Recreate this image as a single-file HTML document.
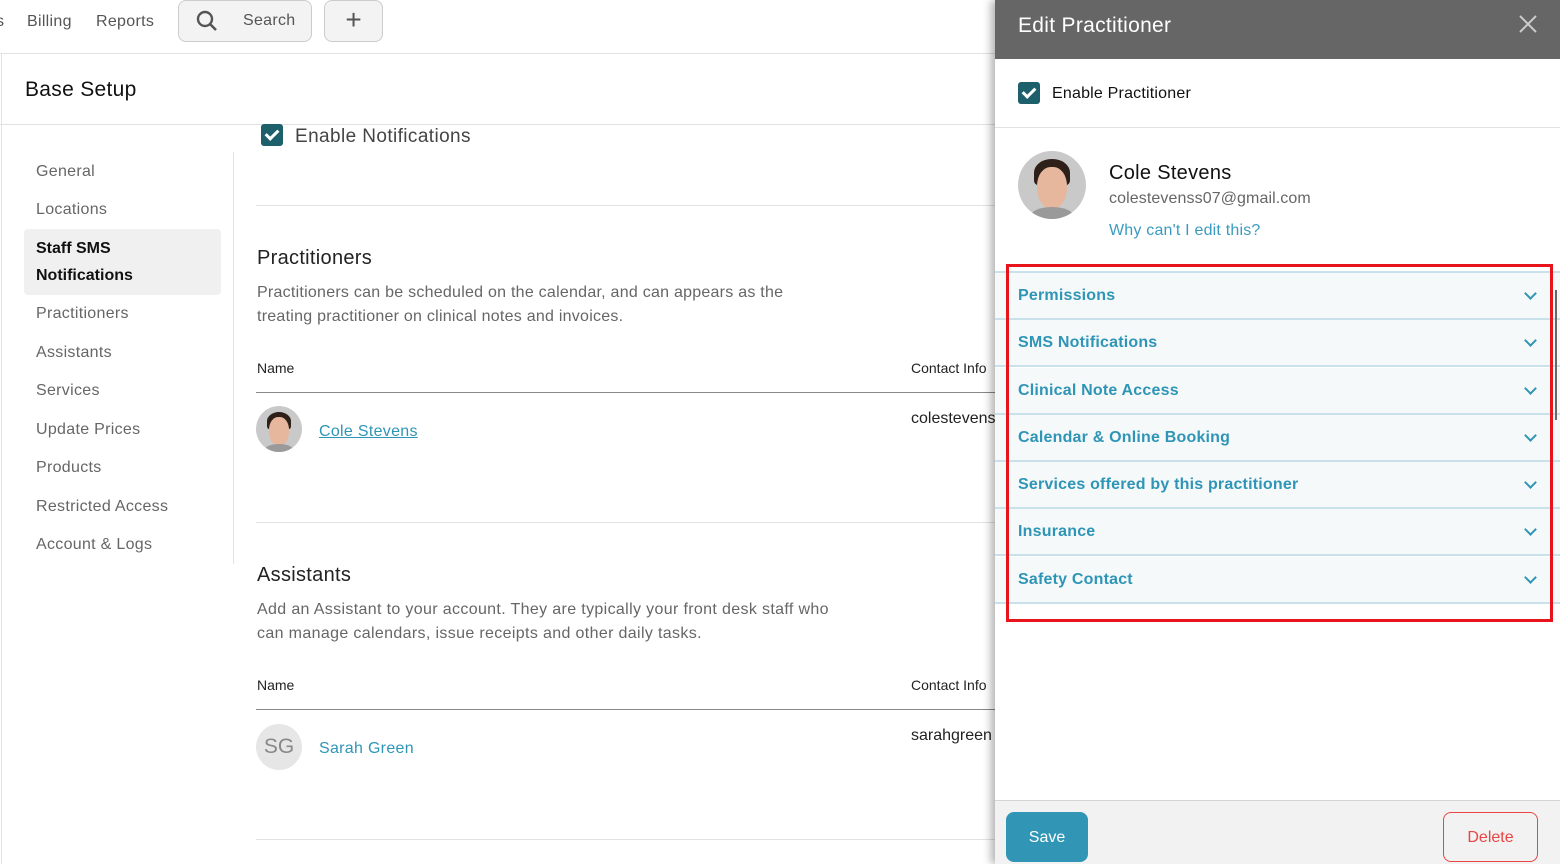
<!DOCTYPE html><html><head><style>
*{box-sizing:border-box;margin:0;padding:0}
body{width:1560px;height:864px;overflow:hidden;font-family:"Liberation Sans",sans-serif;background:#fff;position:relative;color:#222}
.a{position:absolute;white-space:nowrap}
.nav{font-size:16px;color:#555;letter-spacing:.3px}
.side{font-size:16px;color:#666;letter-spacing:.3px}
.cb{width:22px;height:22px;background:#1d5f6b;border-radius:3px}
.cb:after{content:"";position:absolute;left:7px;top:3px;width:5px;height:10px;border:solid #fff;border-width:0 3px 3px 0;transform:rotate(45deg)}
.row{position:absolute;left:995px;width:565px;height:47px;background:#f5f9fa;border-bottom:2px solid #c8e1ea;font-weight:bold;font-size:16px;color:#2f95b6;padding:14px 0 0 23px;letter-spacing:.2px}
.row:after{content:"";position:absolute;right:25px;top:16px;width:7px;height:7px;border:solid #2f95b6;border-width:0 2px 2px 0;transform:rotate(45deg)}
.av{border-radius:50%;overflow:hidden;background:#c9c9c9}
.av i{position:absolute;left:24%;top:12%;width:52%;height:40%;background:#2e2019;border-radius:50% 50% 20% 20%}
.av b{position:absolute;left:28%;top:24%;width:44%;height:62%;background:#e6b79c;border-radius:45% 45% 50% 50%}
.av u{position:absolute;left:18%;top:82%;width:64%;height:30%;background:#9a9a9a;border-radius:50%}
</style></head><body>
<div class="a nav" style="left:-4px;top:13px">s</div>
<div class="a nav" style="left:27px;top:13px">Billing</div>
<div class="a nav" style="left:96px;top:13px">Reports</div>
<div class="a" style="left:178px;top:0;width:134px;height:42px;border:1px solid #ccc;border-radius:8px;background:#f3f3f3"></div>
<svg class="a" style="left:196px;top:10px" width="22" height="22"><circle cx="9" cy="9" r="7" fill="none" stroke="#555" stroke-width="2.4"/><line x1="14" y1="14" x2="20" y2="20" stroke="#555" stroke-width="2.6"/></svg>
<div class="a nav" style="left:243px;top:12px">Search</div>
<div class="a" style="left:324px;top:0;width:59px;height:42px;border:1px solid #ccc;border-radius:8px;background:#f3f3f3;font-size:28px;color:#555;text-align:center;line-height:38px">+</div>
<div class="a" style="left:0;top:53px;width:1000px;height:1px;background:#e2e2e2"></div>
<div class="a" style="left:1px;top:53px;width:1px;height:811px;background:#e2e2e2"></div>
<div class="a" style="left:25px;top:78px;font-size:21px;color:#111;letter-spacing:.3px">Base Setup</div>
<div class="a" style="left:0;top:124px;width:1000px;height:1px;background:#e2e2e2"></div>
<div class="a" style="left:233px;top:152px;width:1px;height:412px;background:#e2e2e2"></div>
<div class="a side" style="left:36px;top:163px">General</div>
<div class="a side" style="left:36px;top:201px">Locations</div>
<div class="a" style="left:24px;top:229px;width:197px;height:66px;background:#f0f0f0;border-radius:4px"></div>
<div class="a" style="left:36px;top:235px;font-size:16px;font-weight:bold;color:#111;line-height:27px">Staff SMS<br>Notifications</div>
<div class="a side" style="left:36px;top:305px">Practitioners</div>
<div class="a side" style="left:36px;top:344px">Assistants</div>
<div class="a side" style="left:36px;top:382px">Services</div>
<div class="a side" style="left:36px;top:421px">Update Prices</div>
<div class="a side" style="left:36px;top:459px">Products</div>
<div class="a side" style="left:36px;top:498px">Restricted Access</div>
<div class="a side" style="left:36px;top:536px">Account &amp; Logs</div>
<div class="a cb" style="left:261px;top:124px"></div>
<div class="a" style="left:295px;top:126px;font-size:19px;color:#444;letter-spacing:.4px">Enable Notifications</div>
<div class="a" style="left:256px;top:205px;width:740px;height:1px;background:#e2e2e2"></div>
<div class="a" style="left:257px;top:247px;font-size:20px;color:#222;letter-spacing:.3px">Practitioners</div>
<div class="a" style="left:257px;top:281px;font-size:16px;color:#666;line-height:24px;letter-spacing:.25px">Practitioners can be scheduled on the calendar, and can appears as the<br>treating practitioner on clinical notes and invoices.</div>
<div class="a" style="left:257px;top:360px;font-size:14px">Name</div>
<div class="a" style="left:911px;top:360px;font-size:14px">Contact Info</div>
<div class="a" style="left:256px;top:392px;width:740px;height:1px;background:#888"></div>
<div class="a av" style="left:256px;top:406px;width:46px;height:46px"><i></i><b></b><u></u></div>
<div class="a" style="left:319px;top:423px;font-size:16px;color:#2f95b6;text-decoration:underline;letter-spacing:.3px">Cole Stevens</div>
<div class="a" style="left:911px;top:410px;font-size:16px;width:84px;overflow:hidden">colestevenss</div>
<div class="a" style="left:256px;top:522px;width:740px;height:1px;background:#e2e2e2"></div>
<div class="a" style="left:257px;top:564px;font-size:20px;color:#222;letter-spacing:.3px">Assistants</div>
<div class="a" style="left:257px;top:598px;font-size:16px;color:#666;line-height:24px;letter-spacing:.35px">Add an Assistant to your account. They are typically your front desk staff who<br>can manage calendars, issue receipts and other daily tasks.</div>
<div class="a" style="left:257px;top:677px;font-size:14px">Name</div>
<div class="a" style="left:911px;top:677px;font-size:14px">Contact Info</div>
<div class="a" style="left:256px;top:709px;width:740px;height:1px;background:#888"></div>
<div class="a" style="left:256px;top:724px;width:46px;height:46px;border-radius:50%;background:#e6e6e6;color:#888;font-size:21px;text-align:center;line-height:46px">SG</div>
<div class="a" style="left:319px;top:740px;font-size:16px;color:#2f95b6;letter-spacing:.3px">Sarah Green</div>
<div class="a" style="left:911px;top:727px;font-size:16px;width:84px;overflow:hidden">sarahgreen</div>
<div class="a" style="left:256px;top:839px;width:740px;height:1px;background:#e2e2e2"></div>

<div class="a" style="left:995px;top:0;width:565px;height:864px;background:#fff;box-shadow:-4px 0 8px rgba(0,0,0,.3)"></div>
<div class="a" style="left:995px;top:0;width:565px;height:59px;background:#666"></div>
<div class="a" style="left:1018px;top:14px;font-size:21px;color:#fff;letter-spacing:.3px">Edit Practitioner</div>
<svg class="a" style="left:1518px;top:14px" width="20" height="20"><path d="M2 2L18 18M18 2L2 18" stroke="#ccc" stroke-width="2"/></svg>
<div class="a cb" style="left:1018px;top:82px"></div>
<div class="a" style="left:1052px;top:85px;font-size:16px;color:#111;letter-spacing:.2px">Enable Practitioner</div>
<div class="a" style="left:995px;top:127px;width:565px;height:1px;background:#e2e2e2"></div>
<div class="a av" style="left:1018px;top:151px;width:68px;height:68px"><i></i><b></b><u></u></div>
<div class="a" style="left:1109px;top:162px;font-size:20px;color:#111;letter-spacing:.3px">Cole Stevens</div>
<div class="a" style="left:1109px;top:190px;font-size:16px;color:#666;letter-spacing:.1px">colestevenss07@gmail.com</div>
<div class="a" style="left:1109px;top:222px;font-size:16px;color:#3a9bbf;letter-spacing:.2px">Why can't I edit this?</div>
<div class="a" style="left:995px;top:271px;width:565px;height:2px;background:#c8e1ea"></div>
<div class="row" style="top:273px">Permissions</div>
<div class="row" style="top:320px">SMS Notifications</div>
<div class="row" style="top:368px">Clinical Note Access</div>
<div class="row" style="top:415px">Calendar &amp; Online Booking</div>
<div class="row" style="top:462px">Services offered by this practitioner</div>
<div class="row" style="top:509px">Insurance</div>
<div class="row" style="top:557px">Safety Contact</div>
<div class="a" style="left:1555px;top:290px;width:2px;height:130px;background:#666"></div>
<div class="a" style="left:1006px;top:264px;width:547px;height:358px;border:3px solid #e8141c"></div>
<div class="a" style="left:995px;top:800px;width:565px;height:64px;background:#f2f2f2;border-top:1px solid #d5d5d5"></div>
<div class="a" style="left:1006px;top:812px;width:82px;height:50px;background:#3196b5;border-radius:8px;color:#fff;font-size:16px;text-align:center;line-height:52px">Save</div>
<div class="a" style="left:1443px;top:812px;width:95px;height:50px;border:1px solid #e84545;border-radius:8px;color:#e84545;font-size:16px;text-align:center;line-height:50px">Delete</div>
</body></html>
